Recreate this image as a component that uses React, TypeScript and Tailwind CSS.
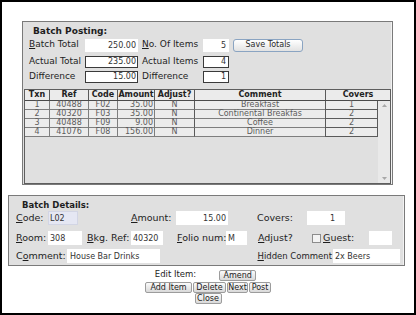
import React from 'react';

// Batch posting screen: totals, posted items grid, detail form and action buttons
const items = [
  { txn: '1', ref: '40488', code: 'F02', amount: '35.00', adjust: 'N', comment: 'Breakfast', covers: '1' },
  { txn: '2', ref: '40320', code: 'F03', amount: '35.00', adjust: 'N', comment: 'Continental Breakfas', covers: '2' },
  { txn: '3', ref: '40488', code: 'F09', amount: '9.00', adjust: 'N', comment: 'Coffee', covers: '2' },
  { txn: '4', ref: '41076', code: 'F08', amount: '156.00', adjust: 'N', comment: 'Dinner', covers: '2' },
];

const btn =
  'h-[11px] border border-[#9c9c9c] rounded-[2px] bg-linear-to-b from-[#fbfbfb] to-[#d9d9d9] text-[8px] leading-[9px] text-[#222] flex items-center justify-center';

function Field({ value, className }: { value: string; className: string }) {
  return (
    <input
      readOnly
      value={value}
      className={`text-[8px] text-[#333] outline-none ${className}`}
    />
  );
}

export default function App() {
  const headCell = 'border-r border-[#5a5a5a] flex items-center justify-center';
  const cell = 'border-r border-b border-[#7e7e7e] flex items-center justify-center';

  return (
    <div className="w-[416px] h-[315px] border-2 border-black bg-white text-[#1e1e1e] font-['DejaVu_Sans',Verdana,sans-serif] overflow-hidden">
      {/* Batch Posting */}
      <div className="ml-[20px] mt-[19px] w-[371px] h-[164px] border border-[#7a7a7a] bg-[#e0e0e0] flex flex-col shadow-[inset_-1px_0_0_#f2f2f2]">
        <div className="pt-[3px] pl-[10px] h-[15px] text-[9px] leading-[12px] font-bold">Batch Posting:</div>

        <div className="flex items-center h-[14px] pl-[6px] mt-[1px] text-[9px]">
          <span className="w-[56px]"><u>B</u>atch Total</span>
          <Field value="250.00" className="w-[53px] h-[13px] bg-white text-right pr-[2px]" />
          <span className="w-[61px] ml-[4px]"><u>N</u>o. Of Items</span>
          <Field value="5" className="w-[26px] h-[13px] bg-white text-right pr-[3px]" />
          <button className="ml-[4px] w-[70px] h-[13px] border border-[#8aa4c2] rounded-[3px] bg-linear-to-b from-[#ffffff] to-[#e2e2e2] text-[8px] leading-[10px] text-[#2a2a2a]">
            Save Totals
          </button>
        </div>

        <div className="flex items-center h-[14px] pl-[6px] mt-[3px] text-[9px]">
          <span className="w-[56px]">Actual Total</span>
          <Field value="235.00" className="w-[53px] h-[12px] bg-white border border-[#3a3a3a] text-right pr-[1px]" />
          <span className="w-[61px] ml-[4px]">Actual Items</span>
          <Field value="4" className="w-[26px] h-[12px] bg-white border border-[#3a3a3a] text-right pr-[2px]" />
        </div>

        <div className="flex items-center h-[14px] pl-[6px] mt-[1px] text-[9px]">
          <span className="w-[56px]">Difference</span>
          <Field value="15.00" className="w-[53px] h-[12px] bg-white border border-[#3a3a3a] text-right pr-[1px]" />
          <span className="w-[61px] ml-[4px]">Difference</span>
          <Field value="1" className="w-[26px] h-[12px] bg-white border border-[#3a3a3a] text-right pr-[2px]" />
        </div>

        {/* Posted items grid */}
        <div className="ml-[1px] mt-[5px] w-[367px] h-[95px] border border-[#5e5e5e] bg-[#e0e0e0] flex flex-col text-[8px] leading-[8px]">
          <div className="grid grid-cols-[25px_39px_29px_37px_40px_131px_64px] h-[11px] border-b border-[#4a4a4a] bg-[#ebebeb] font-bold text-[#222]">
            <div className={headCell}>Txn</div>
            <div className={headCell}>Ref</div>
            <div className={headCell}>Code</div>
            <div className={headCell}>Amount</div>
            <div className={headCell}>Adjust?</div>
            <div className={headCell}>Comment</div>
            <div className="flex items-center justify-center">Covers</div>
          </div>
          <div className="flex flex-1">
            <div className="w-[353px]">
              {items.map((it) => (
                <div
                  key={it.txn}
                  className="grid grid-cols-[25px_39px_29px_37px_40px_131px_52px] h-[9px] bg-[#ececec] text-[#5c5c5c]"
                >
                  <div className={cell}>{it.txn}</div>
                  <div className={cell}>{it.ref}</div>
                  <div className={cell}>{it.code}</div>
                  <div className="border-r border-b border-[#7e7e7e] flex items-center justify-end pr-[1px]">{it.amount}</div>
                  <div className={cell}>{it.adjust}</div>
                  <div className={`${cell} border-l border-l-[#5a5a5a] -ml-px`}>{it.comment}</div>
                  <div className="border-r border-b border-[#5a5a5a] border-l border-l-[#5a5a5a] -ml-px flex items-center justify-center">{it.covers}</div>
                </div>
              ))}
            </div>
            <div className="w-[12px] bg-[#e9e9e9] flex flex-col justify-between items-center py-[3px]">
              <svg width="5" height="3" viewBox="0 0 5 3"><path d="M0 3 L2.5 0 L5 3 Z" fill="#a8a8a8" /></svg>
              <svg width="5" height="3" viewBox="0 0 5 3"><path d="M0 0 L2.5 3 L5 0 Z" fill="#a8a8a8" /></svg>
            </div>
          </div>
        </div>
      </div>

      {/* Batch Details */}
      <div className="ml-[6px] mt-[10px] w-[397px] h-[71px] border border-[#7a7a7a] bg-[#e0e0e0] flex flex-col text-[9.5px] shadow-[inset_-1px_0_0_#f2f2f2]">
        <div className="pt-[3px] pl-[13px] h-[15px] text-[8.5px] leading-[12px] font-bold">Batch Details:</div>

        <div className="flex items-center h-[14px] pl-[7px]">
          <span className="w-[32px]"><u>C</u>ode:</span>
          <Field value="L02" className="w-[30px] h-[14px] bg-[#e5e7f3] border border-[#d2d5e4] pl-[1px]" />
          <span className="w-[45px] ml-[53px]"><u>A</u>mount:</span>
          <Field value="15.00" className="w-[52px] h-[14px] bg-white text-right pr-[2px]" />
          <span className="w-[50px] ml-[29px]">Covers:</span>
          <Field value="1" className="w-[38px] h-[14px] bg-white text-right pr-[10px]" />
        </div>

        <div className="flex items-center h-[14px] pl-[7px] mt-[6px]">
          <span className="w-[32px]"><u>R</u>oom:</span>
          <Field value="308" className="w-[34px] h-[14px] bg-white pl-[2px]" />
          <span className="w-[44px] ml-[5px]"><u>B</u>kg. Ref:</span>
          <Field value="40320" className="w-[32px] h-[14px] bg-white pl-[2px]" />
          <span className="w-[49px] ml-[14px] whitespace-nowrap"><u>F</u>olio num:</span>
          <Field value="M" className="w-[21px] h-[14px] bg-white pl-[2px]" />
          <span className="w-[54px] ml-[11px]"><u>A</u>djust?</span>
          <span className="w-[9px] h-[9px] border border-[#8c8c8c] bg-[#f3f3f3]" />
          <span className="w-[46px] ml-[2px]"><u>G</u>uest:</span>
          <Field value="" className="w-[23px] h-[14px] bg-white" />
        </div>

        <div className="flex items-center h-[14px] pl-[7px] mt-[4px]">
          <span className="w-[51px]">C<u>o</u>mment:</span>
          <Field value="House Bar Drinks" className="w-[93px] h-[14px] bg-white pl-[3px]" />
          <span className="flex-1 text-right pr-[1px] text-[8.5px] whitespace-nowrap"><u>H</u>idden Comment</span>
          <Field value="2x Beers" className="w-[67px] h-[14px] bg-white pl-[2px] mr-[4px]" />
        </div>
      </div>

      {/* Actions */}
      <div className="flex flex-col items-center mt-[2px] text-[8.5px]">
        <div className="flex items-center h-[13px] -ml-[5px]">
          <span>Edit Item:</span>
          <Field value="" className="w-[18px] h-[12px] bg-white ml-[1px]" />
          <button className={`${btn} w-[37px] ml-[4px] mt-[2px]`}>Amend</button>
        </div>
        <div className="flex gap-[1px] mt-[1px]">
          <button className={`${btn} w-[47px]`}>Add Item</button>
          <button className={`${btn} w-[33px]`}>Delete</button>
          <button className={`${btn} w-[21px]`}>Next</button>
          <button className={`${btn} w-[22px]`}>Post</button>
        </div>
        <button className={`${btn} w-[27px]`}>Close</button>
      </div>
    </div>
  );
}
